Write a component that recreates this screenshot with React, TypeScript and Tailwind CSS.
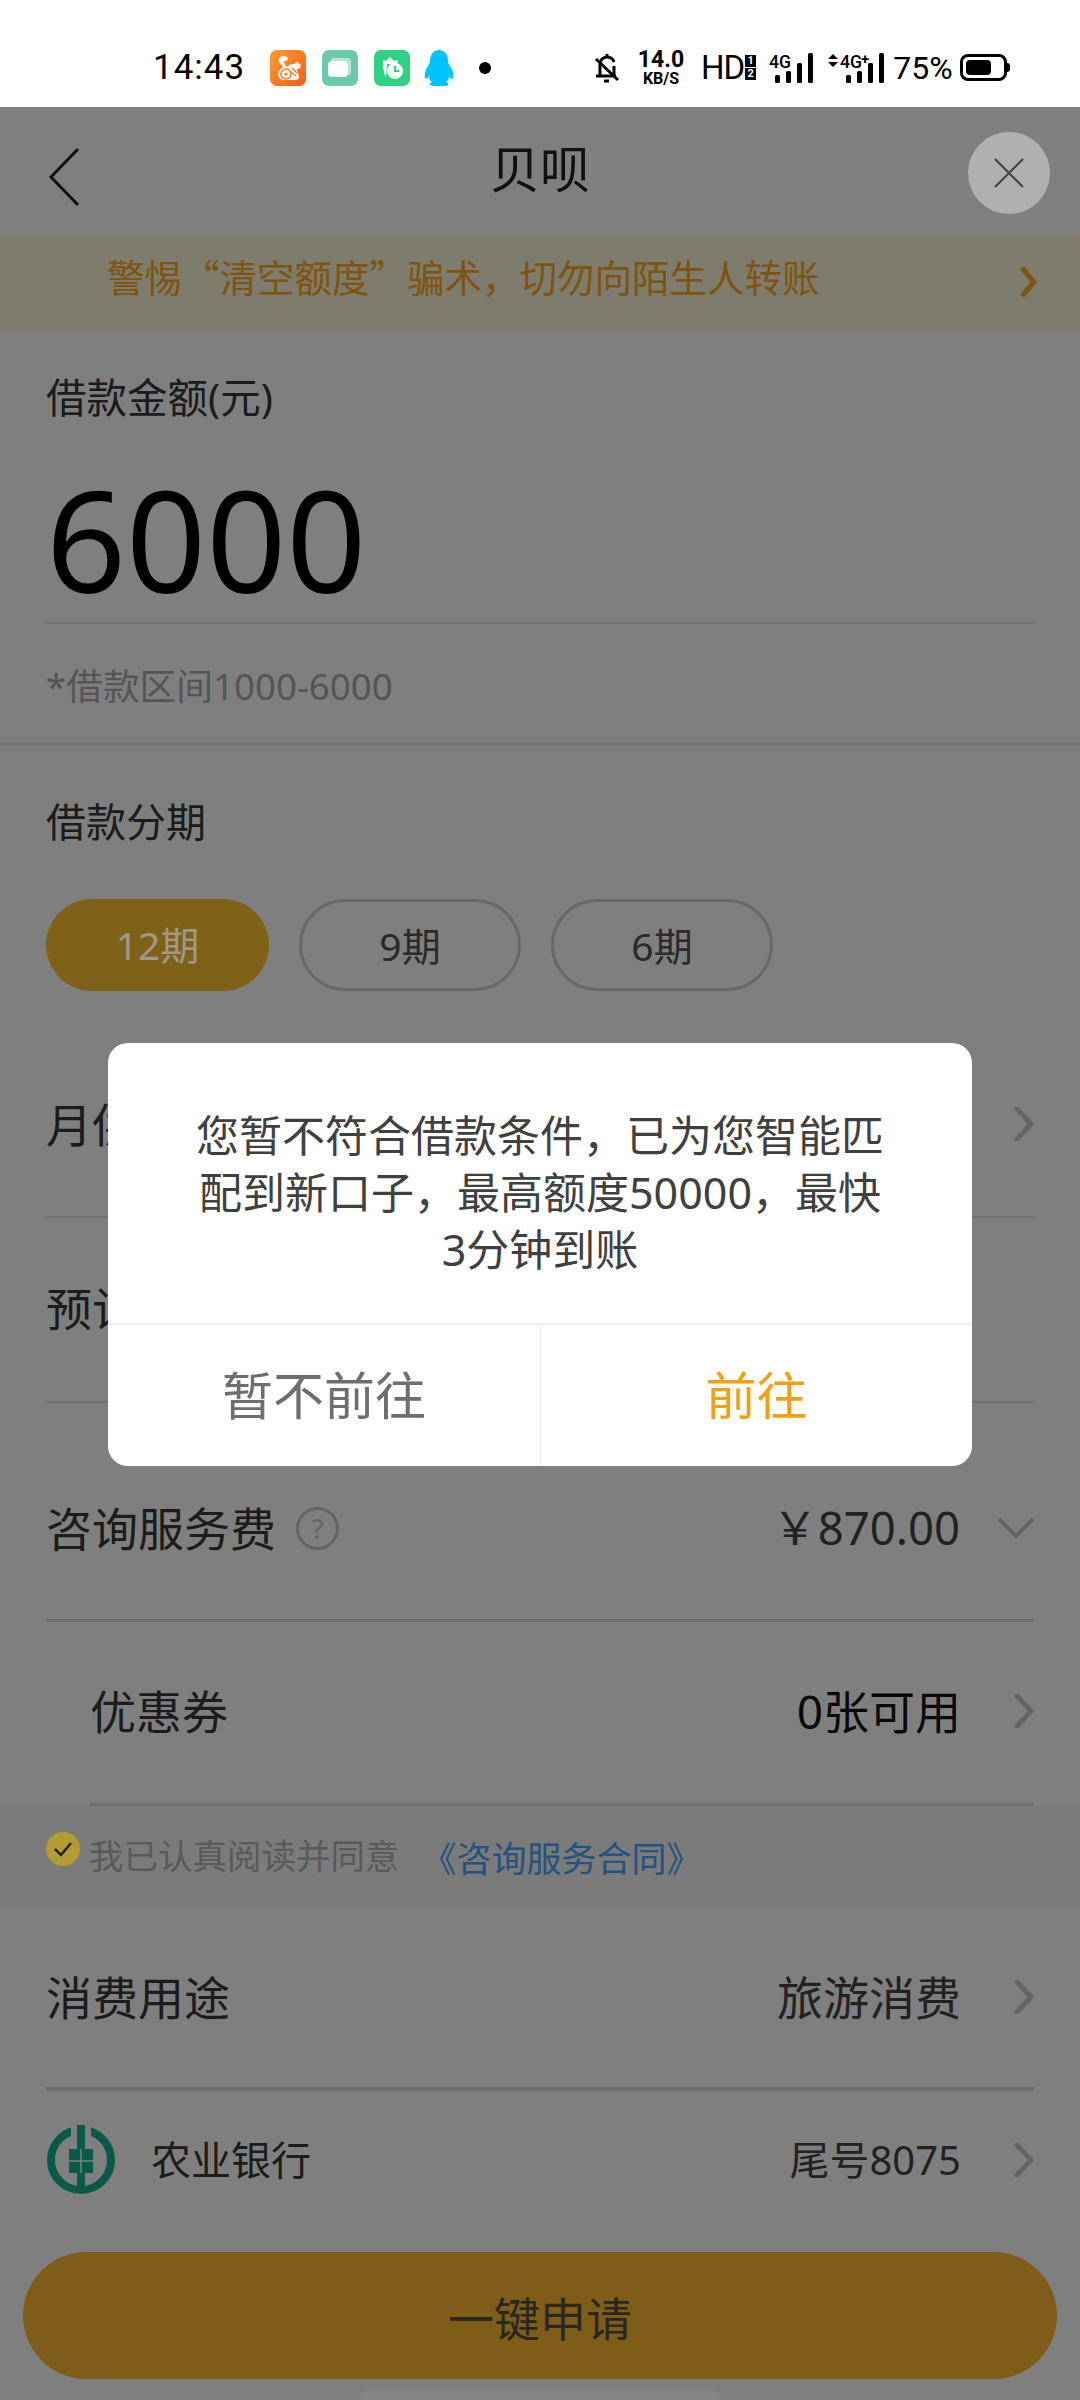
import type { ReactNode } from 'react'

const CHEVRON_GRAY = '#c8c8c8'

function ChevronRight({ color = CHEVRON_GRAY, width = 5 }: { color?: string; width?: number }) {
  return (
    <svg width="20" height="34" viewBox="0 0 20 34" fill="none" className="shrink-0">
      <path d="M3 2l14 15L3 32" stroke={color} strokeWidth={width} strokeLinecap="round" strokeLinejoin="round" />
    </svg>
  )
}

function UcIcon() {
  return (
    <div className="w-9 h-9 rounded-[7px] bg-gradient-to-br from-[#ff9a2e] to-[#ff5a14] flex items-center justify-center">
      <svg width="30" height="30" viewBox="0 0 30 30" fill="none">
        <path
          d="M11 3c-4 0-6 3-5 6 1 2 3 3 4 5-2 2-5 4-5 8 0 3 3 5 8 5h9c2 0 4-1 4-3 0-3-2-5-2-8l3-1 1-3-4-3-3 2c-3 0-5 1-7 3-1-2-3-3-3-5 0-1 1-2 3-1l1-3c-1-1-2-2-4-2z"
          fill="#fff"
        />
        <circle cx="13" cy="21" r="5" fill="none" stroke="#ff7a1e" strokeWidth="1.6" />
        <circle cx="13" cy="21" r="1.6" fill="#ff7a1e" />
        <path d="M19 15l5 5M18 19l5 4" stroke="#ff7a1e" strokeWidth="1.4" />
      </svg>
    </div>
  )
}

function CardsIcon() {
  return (
    <div className="w-9 h-9 rounded-[7px] bg-[#6bcba9] flex items-center justify-center">
      <svg width="30" height="30" viewBox="0 0 30 30">
        <path d="M9 5h13a4 4 0 0 1 4 4v10a3 3 0 0 1-3 3V11a3 3 0 0 0-3-3H6a3 3 0 0 1 3-3z" fill="#b5e5d3" />
        <rect x="3" y="8" width="20" height="16" rx="4" fill="#fff" />
      </svg>
    </div>
  )
}

function ClockIcon() {
  return (
    <div className="w-9 h-9 rounded-[7px] bg-[#2fd283] flex items-center justify-center">
      <svg width="30" height="30" viewBox="0 0 30 30">
        <path d="M6 7l3 1 4-4 4 4 4-1-1 4H10l-1 13c-2-3-3-8-3-17z" fill="#fff" />
        <circle cx="18" cy="18" r="8" fill="#fff" />
        <path d="M18 13v5h4" stroke="#2fd283" strokeWidth="2" fill="none" />
      </svg>
    </div>
  )
}

function PenguinIcon() {
  return (
    <svg width="30" height="36" viewBox="0 0 30 36" className="ml-[14px]">
      <path
        d="M15 0c6 0 9 5 9 11 0 2 1 3 2 5 2 3 4 8 3 12-1 2-3 0-4-2 0 3-1 5-3 6 2 1 3 2 2 3-1 1-5 1-9 1s-8 0-9-1c-1-1 0-2 2-3-2-1-3-3-3-6-1 2-3 4-4 2-1-4 1-9 3-12 1-2 2-3 2-5C6 5 9 0 15 0z"
        fill="#00c3ff"
      />
    </svg>
  )
}

function BellOff() {
  return (
    <svg width="28" height="32" viewBox="0 0 28 32" fill="none" stroke="#000" strokeWidth="3">
      <path d="M3 24h20M7 24V13c0-5 3-8 7-8 3 0 6 2 7 5M21 14v10" />
      <path d="M14 2v3" />
      <path d="M3 7l22 21" />
      <path d="M11 29h5" />
    </svg>
  )
}

function Signal({ plus }: { plus?: boolean }) {
  return (
    <svg
      width={plus ? 58 : 45}
      height="32"
      viewBox={plus ? '0 0 58 32' : '0 0 45 32'}
      fontFamily="Roboto, sans-serif"
      className="overflow-visible"
    >
      {plus && <path d="M1 7l5-5 5 5zM1 10l5 5 5-5z" fill="#000" />}
      <text x={plus ? 13 : 0} y="16" fontSize="18" fontWeight="500" fill="#000" textLength="22" lengthAdjust="spacingAndGlyphs">4G</text>
      {plus && <text x="34" y="12" fontSize="15" fontWeight="700" fill="#000">+</text>}
      {[0, 1, 2, 3].map((i) => {
        const heights = [8, 12, 20, 30]
        const x = (plus ? 19 : 6) + i * 11
        return <rect key={i} x={x} y={31 - heights[i]} width="5" height={heights[i]} rx="1.5" fill="#000" />
      })}
    </svg>
  )
}

function Battery() {
  return (
    <div className="flex items-center">
      <div className="w-[47px] h-[27px] rounded-[8px] border-[3px] border-black p-[3px]">
        <div className="h-full w-[72%] rounded-[4px] bg-black" />
      </div>
      <div className="w-[3px] h-[9px] rounded-r-sm bg-black" />
    </div>
  )
}

function StatusBar() {
  return (
    <div className="h-[107px] bg-white flex items-center pl-[153px] pt-[28px] font-['Roboto',sans-serif] text-black">
      <span className="w-[90px] text-[35px] leading-none tracking-[1px]">14:43</span>
      <div className="ml-[27px] flex items-center gap-4">
        <UcIcon />
        <CardsIcon />
        <ClockIcon />
      </div>
      <PenguinIcon />
      <span className="ml-[25px] w-3 h-3 rounded-full bg-black" />
      <div className="ml-[102px]">
        <BellOff />
      </div>
      <div className="ml-[16px] w-[48px] flex flex-col items-center font-bold leading-none">
        <span className="text-[23px] leading-[22px]">14.0</span>
        <span className="text-[16px] leading-[16px]">KB/S</span>
      </div>
      <span className="ml-[16px] text-[33px] leading-none tracking-[-1px]">HD</span>
      <div className="flex flex-col gap-[1px] ml-[1px] text-[11px] leading-[12px] font-bold text-white">
        <span className="w-[11px] h-[12px] bg-black text-center">1</span>
        <span className="w-[11px] h-[12px] bg-black text-center">2</span>
      </div>
      <div className="ml-[13px]">
        <Signal />
      </div>
      <div className="ml-[13px]">
        <Signal plus />
      </div>
      <span className="ml-[8px] text-[32px] leading-none">75%</span>
      <div className="ml-[7px]">
        <Battery />
      </div>
    </div>
  )
}

function NavBar() {
  return (
    <div className="h-[127px] bg-white flex items-center justify-center relative">
      <svg width="32" height="60" viewBox="0 0 32 60" fill="none" className="absolute left-[48px] top-[40px]">
        <path d="M30 2L3 30l27 28" stroke="#222" strokeWidth="3" />
      </svg>
      <span className="text-[50px] leading-none text-[#222] pb-[3px]">贝呗</span>
      {/* sits above the scrim */}
      <button className="absolute z-20 left-[968px] top-[25px] w-[82px] h-[82px] rounded-full bg-[#b0b0b0] flex items-center justify-center">
        <svg width="30" height="30" viewBox="0 0 30 30" fill="none">
          <path d="M1 1l28 28M29 1L1 29" stroke="#444" strokeWidth="2" />
        </svg>
      </button>
    </div>
  )
}

function Banner() {
  return (
    <div className="h-[96px] bg-[#fdf8d9] flex items-center pl-[107px] pr-[43px] justify-between font-['Noto_Sans_CJK_SC',sans-serif]">
      <span className="text-[37.5px] leading-none text-[#ffa822] pb-[12px]">警惕“清空额度”骗术，切勿向陌生人转账</span>
      <svg width="18" height="32" viewBox="0 0 18 32" fill="none">
        <path d="M3 2l12 14L3 30" stroke="#ffa822" strokeWidth="5" />
      </svg>
    </div>
  )
}

function AmountSection() {
  return (
    <div className="h-[415px] bg-white border-b-2 border-[#e6e6e6] px-[46px]">
      <div className="pt-[44px] text-[40.5px] leading-[48px] text-[#383838]">借款金额(元)</div>
      <div className="mt-[39px] pt-[8px] h-[163px] border-b-2 border-[#e0e0e0] text-[140px] leading-[140px] text-black">6000</div>
      <div className="mt-[38px] text-[36.7px] leading-[48px] text-[#aaa]">*借款区间1000-6000</div>
    </div>
  )
}

function TermPill({ label, active }: { label: string; active?: boolean }) {
  if (active) {
    return (
      <div className="w-[223px] h-[92px] rounded-[46px] bg-[#ffc430] flex items-center justify-center text-[39px]">
        <span className="relative z-20 text-[#a0998a]">{label}</span>
      </div>
    )
  }
  return (
    <div className="w-[222px] h-[92px] rounded-[46px] border-[3px] border-[#d0d0d0] flex items-center justify-center pt-[2px] text-[39px] text-[#555]">
      {label}
    </div>
  )
}

function TermSection() {
  return (
    <div className="h-[290px] bg-white px-[46px]">
      <div className="pt-[53px] text-[40px] leading-[48px] text-[#383838]">借款分期</div>
      <div className="mt-[53px] flex gap-[30px]">
        <TermPill label="12期" active />
        <TermPill label="9期" />
        <TermPill label="6期" />
      </div>
    </div>
  )
}

function Row({ label, right, className }: { label: ReactNode; right?: ReactNode; className: string }) {
  return (
    <div className={`bg-white flex items-center justify-between ${className}`}>
      <div className="text-[46px] leading-none text-[#383838] flex items-center">{label}</div>
      {right}
    </div>
  )
}

function Value({ children }: { children: ReactNode }) {
  return (
    <div className="flex items-center gap-[53px]">
      <span className="text-[46px] leading-none text-[#444]">{children}</span>
      <ChevronRight />
    </div>
  )
}

function FeeRows() {
  return (
    <div className="bg-white px-[46px]">
      <Row label="月供" right={<ChevronRight />} className="h-[183px] pb-[3px] border-b-2 border-[#e0e0e0]" />
      <Row label="预计" className="h-[185px] pb-[3px] border-b-2 border-[#e0e0e0]" />
      <Row
        className="h-[219px] pt-[34px] border-b-[3px] border-[#dedede]"
        label={
          <>
            咨询服务费
            <span className="ml-5 w-[43px] h-[43px] rounded-full border-[3px] border-[#c8c8c8] text-[28px] leading-[36px] text-center text-[#c8c8c8]">
              ?
            </span>
          </>
        }
        right={
          <div className="flex items-center gap-[38px]">
            <span className="text-[45.5px] leading-none text-[#444]">￥870.00</span>
            <svg width="36" height="20" viewBox="0 0 36 20" fill="none">
              <path d="M1 1l17 17L35 1" stroke={CHEVRON_GRAY} strokeWidth="4" />
            </svg>
          </div>
        }
      />
      <div className="pl-[44px]">
        <Row
          label="优惠券"
          className="h-[184px] pb-[4px] border-b-[3px] border-[#dedede]"
          right={<Value><span className="text-[#111]">0张可用</span></Value>}
        />
      </div>
    </div>
  )
}

function Agreement() {
  return (
    <div className="h-[100px] bg-[#f6f6f6] px-[46px] flex items-center leading-none">
      <span className="relative z-20 -mt-[14px] w-[34px] h-[34px] rounded-full bg-[#b39c30] flex items-center justify-center">
        <svg width="20" height="16" viewBox="0 0 20 16" fill="none">
          <path d="M2 8l6 6L18 2" stroke="#222" strokeWidth="2.5" />
        </svg>
      </span>
      <span className="ml-[9px] text-[34.5px] text-[#b4b4b4]">我已认真阅读并同意</span>
      <span className="ml-[22px] text-[35px] text-[#4aa4ff] font-['Noto_Sans_CJK_SC',sans-serif]">《咨询服务合同》</span>
    </div>
  )
}

function BankLogo() {
  return (
    <svg width="70" height="70" viewBox="0 0 70 70" fill="none">
      <circle cx="35" cy="35" r="30" stroke="#12b48c" strokeWidth="8" />
      {/* ear of wheat: stem, husk gap and grain block */}
      <path d="M25 0h20v20l-5 5H30l-5-5z" fill="#fff" />
      <rect x="31" y="0" width="8" height="24" fill="#12b48c" />
      <rect x="23" y="24" width="24" height="24" fill="#12b48c" />
      <path d="M23 36h24M35 24v24" stroke="#fff" strokeWidth="1.5" />
      <rect x="31" y="48" width="8" height="20" fill="#12b48c" />
    </svg>
  )
}

function PurposeAndBank() {
  return (
    <div className="bg-white">
      <div className="h-[185px] mx-[46px] border-b-[4px] border-[#dedede]">
        <Row label="消费用途" className="h-full" right={<Value>旅游消费</Value>} />
      </div>
      <div className="h-[161px] pb-[23px] px-[46px] flex items-center justify-between bg-white">
        <div className="flex items-center gap-[35px] text-[40px] leading-none text-[#383838]">
          <BankLogo />
          农业银行
        </div>
        <div className="flex items-center gap-[53px]">
          <span className="text-[40px] leading-none text-[#444]">尾号8075</span>
          <ChevronRight />
        </div>
      </div>
    </div>
  )
}

function ApplyBar() {
  return (
    <div className="h-[148px] bg-white px-[23px]">
      <div className="h-[127px] rounded-[64px] bg-[#feba30] flex items-center justify-center pt-[5px] text-[46px] text-[#55503a]">
        一键申请
      </div>
      {/* gesture handle stays above the scrim */}
      <div className="relative z-20 mt-[12px] mx-auto w-[360px] h-[9px] rounded-t-md bg-[#868686]" />
    </div>
  )
}

function Dialog() {
  return (
    <div className="absolute z-30 left-[108px] top-[1043px] w-[864px] h-[423px] rounded-[20px] bg-white flex flex-col overflow-hidden">
      <div className="h-[282px] pt-[18px] border-b-2 border-[#ececec] flex items-center justify-center px-[80px]">
        <p className="text-[43px] leading-[57px] text-[#404040] text-center">
          您暂不符合借款条件，已为您智能匹配到新口子，最高额度50000，最快3分钟到账
        </p>
      </div>
      <div className="flex-1 flex text-[51px]">
        <div className="w-[433px] border-r border-[#ececec] flex items-center justify-center text-[#6e6e6e]">暂不前往</div>
        <div className="flex-1 flex items-center justify-center text-[#f0a010]">前往</div>
      </div>
    </div>
  )
}

export default function App() {
  return (
    <div className="relative w-[1080px] h-[2400px] overflow-hidden bg-white font-['Noto_Sans','Noto_Sans_CJK_SC',sans-serif]">
      <StatusBar />
      <NavBar />
      <Banner />
      <AmountSection />
      <TermSection />
      <FeeRows />
      <Agreement />
      <PurposeAndBank />
      <ApplyBar />
      {/* scrim over everything below the status bar */}
      <div className="absolute z-10 inset-x-0 top-[107px] bottom-0 bg-black/50" />
      <Dialog />
    </div>
  )
}
